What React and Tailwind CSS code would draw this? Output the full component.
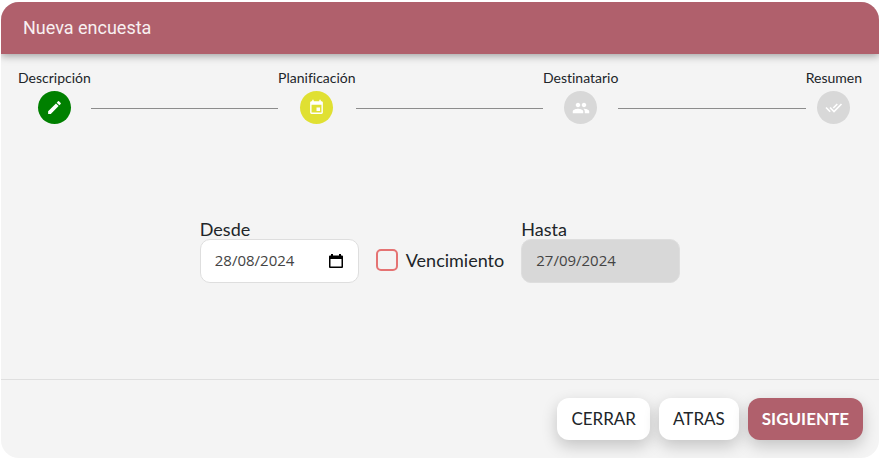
import React, { Fragment, useState } from "react";
import { MdEdit, MdEvent, MdPeople } from "react-icons/md";

const STEPS = [
  { label: "Descripción", icon: "edit", color: "bg-[#008000]" },
  { label: "Planificación", icon: "event", color: "bg-[#e0e032]" },
  { label: "Destinatario", icon: "people", color: "bg-[#d8d8d8]" },
  { label: "Resumen", icon: "done", color: "bg-[#d8d8d8]" },
];

function StepIcon({ name }) {
  if (name === "edit") return <MdEdit size={17} />;
  if (name === "event") return <MdEvent size={17} />;
  if (name === "people") return <MdPeople size={18} />;

  // Double check
  return (
    <svg width="18" height="18" viewBox="0 0 18 18" fill="none" stroke="currentColor" strokeWidth="1.6">
      <path d="M1 8.500L5.200 12.700M5 8.500L9 12.500L16.500 5M8.300 9L12.300 5" />
    </svg>
  );
}

function Stepper() {
  return (
    <div className="flex items-start px-[17px] pt-[11px]">
      {STEPS.map((step, idx) => (
        <Fragment key={step.label}>
          {idx > 0 && <div className="mt-[43px] h-px flex-1 bg-[#8c8c8c]" />}

          <div className="flex flex-col items-center gap-px">
            <span className="text-sm leading-[25px]">{step.label}</span>
            <span
              className={`flex size-[33px] items-center justify-center rounded-full text-white ${step.color}`}
            >
              <StepIcon name={step.icon} />
            </span>
          </div>
        </Fragment>
      ))}
    </div>
  );
}

export default function App() {
  const [desde, setDesde] = useState("28/08/2024");
  const [vencimiento, setVencimiento] = useState(false);

  return (
    <div className="bg-white pt-0.5 pl-px font-['Lato',sans-serif] text-[#212529] [font-variant-ligatures:none]">
      <div className="overflow-hidden rounded-[18px] bg-[#f4f4f4]">
        <header className="bg-[#b0606c] px-[22px] py-3 shadow-[0_2px_8px_rgba(0,0,0,0.35)]">
          <h1 className="font-['Roboto',sans-serif] text-lg leading-7 text-[#f8f0f1]">
            Nueva encuesta
          </h1>
        </header>

        <Stepper />

        <div className="flex items-end justify-center gap-[17px] pt-[95px] pb-24 text-lg leading-5">
          <div className="flex flex-col">
            <label htmlFor="desde">Desde</label>
            <div className="relative">
              <input
                id="desde"
                type="text"
                value={desde}
                onChange={(e) => setDesde(e.target.value)}
                className="h-11 w-[159px] rounded-[10px] border border-[#dedede] bg-white px-3.5 pb-[3px] font-['Open_Sans',sans-serif] text-[15px] text-[#444444]"
              />
              <button
                type="button"
                aria-label="Elegir fecha"
                className="absolute inset-y-0 right-4 flex items-center text-black"
              >
                <svg width="14" height="16" viewBox="0 0 14 16" fill="currentColor">
                  <path d="M2 1h2v1.500h6V1h2v1.500h1A1 1 0 0 1 14 3.500V14a1 1 0 0 1-1 1H1a1 1 0 0 1-1-1V3.500a1 1 0 0 1 1-1h1zM1.500 6v7.500h11V6z" />
                </svg>
              </button>
            </div>
          </div>

          <label className="flex h-11 items-center gap-2 pb-[3px]">
            <input
              type="checkbox"
              checked={vencimiento}
              onChange={(e) => setVencimiento(e.target.checked)}
              className="size-[22px] appearance-none rounded-[5px] border-2 border-[#e57373] checked:bg-[#e57373]"
            />
            Vencimiento
          </label>

          <div className="flex flex-col">
            <label htmlFor="hasta">Hasta</label>
            <input
              id="hasta"
              type="text"
              value="27/09/2024"
              disabled
              className="h-11 w-[159px] rounded-[10px] border border-[#dedede] bg-[#d8d8d8] px-3.5 pb-[3px] font-['Open_Sans',sans-serif] text-[15px] text-[#444444]"
            />
          </div>
        </div>

        <footer className="flex justify-end gap-[9px] border-t border-[#dfdfdf] px-4 py-[18px] text-[17px]">
          <button className="h-[42px] rounded-xl bg-white px-3.5 shadow-[0_6px_16px_rgba(0,0,0,0.2)]">
            CERRAR
          </button>
          <button className="h-[42px] rounded-xl bg-white px-3.5 shadow-[0_6px_16px_rgba(0,0,0,0.2)]">
            ATRAS
          </button>
          <button className="h-[42px] rounded-xl bg-[#b0606c] px-3.5 font-bold text-white shadow-[0_6px_16px_rgba(0,0,0,0.2)]">
            SIGUIENTE
          </button>
        </footer>
      </div>
    </div>
  );
}
